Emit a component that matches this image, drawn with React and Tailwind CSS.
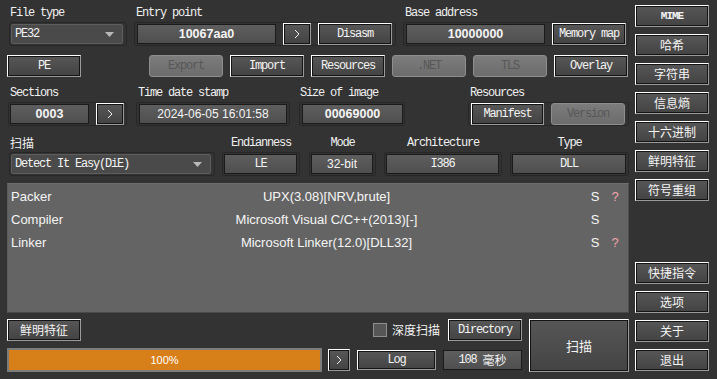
const mono = { fontFamily: '"Liberation Mono", "DejaVu Sans Mono", monospace' };

function Btn({ children, className = '', w = 'w-[74px]', h = 'h-[22px]', text = 'text-[12px] tracking-[-1.2px]', font = 'mono' }) {
  const f = font === 'mono' ? "font-['Liberation_Mono',monospace]" : "font-['Noto_Sans_CJK_SC','Noto_Sans',sans-serif]";
  return (
    <div className={`${w} ${h} shrink-0 border border-t-white border-l-white border-r-[#9a9a9a] border-b-[#9a9a9a] ${className}`}>
      <div className={`w-full h-full border border-[#141414] bg-gradient-to-b from-[#565656] to-[#444444] flex items-center justify-center text-[#f4f4f4] ${text} ${f} leading-none`}>
        {children}
      </div>
    </div>
  );
}

function Disabled({ children }) {
  return (
    <div className="w-[74px] h-[22px] shrink-0 rounded-[3px] border border-[#8e8e8e] bg-gradient-to-b from-[#7c7c7c] to-[#6c6c6c] flex items-center justify-center text-[#575757] text-[12px] tracking-[-1.2px] font-['Liberation_Mono',monospace]">
      {children}
    </div>
  );
}

function Field({ children, className = '', w, bold, mono: m }) {
  const f = m
    ? "font-['Liberation_Mono',monospace] text-[12px] tracking-[-1.2px]"
    : bold
    ? "font-['Liberation_Sans',Arial,sans-serif] font-bold text-[12.5px]"
    : "font-['Liberation_Sans',Arial,sans-serif] text-[12px]";
  return (
    <div className={`${w} h-[20px] shrink-0 border border-[#1a1a1a] bg-gradient-to-b from-[#5e5e5e] to-[#4f4f4f] flex items-center justify-center text-[#f4f4f4] ${f} ${className}`}>
      {children}
    </div>
  );
}

function Frame({ w, children, className = '' }) {
  return (
    <div className={`${w} h-[24px] border border-[#272727] rounded-[3px] flex items-center ${className}`}>
      {children}
    </div>
  );
}

function Label({ children, className = '' }) {
  return (
    <div className={`h-[16px] text-[12px] tracking-[-1.2px] leading-[16px] text-[#f0f0f0] font-['Liberation_Mono',monospace] whitespace-nowrap ${className}`}>
      {children}
    </div>
  );
}

function Combo({ w, children }) {
  return (
    <div className={`${w} h-[20px] rounded-[2px] border border-[#5e5e5e] bg-[#4a4a4a] flex items-center pl-[3px] pr-[8px] text-[#f4f4f4] text-[12px] tracking-[-1.2px] font-['Liberation_Mono',monospace]`}>
      <span className="flex-1 whitespace-nowrap">{children}</span>
      <svg width="9" height="5" viewBox="0 0 9 5"><path d="M0 0h9L4.5 5z" fill="#b8b8b8" /></svg>
    </div>
  );
}

function Arrow() {
  return (
    <svg width="6" height="10" viewBox="0 0 6 10"><path d="M1 1l4 4-4 4" stroke="#f0f0f0" strokeWidth="1" fill="none" /></svg>
  );
}

const results = [
  ['Packer', 'UPX(3.08)[NRV,brute]', true],
  ['Compiler', 'Microsoft Visual C/C++(2013)[-]', false],
  ['Linker', 'Microsoft Linker(12.0)[DLL32]', true],
];

export default function App() {
  const cjk = "font-['Noto_Sans_CJK_SC','Noto_Sans',sans-serif] text-[12px]";
  return (
    <div className="w-[717px] h-[379px] bg-[#333333] flex pl-[7px] pt-[5px] overflow-hidden select-none">
      {/* main column */}
      <div className="w-[622px] flex flex-col">
        {/* row 1 */}
        <div className="flex">
          <div className="ml-[2px]">
            <Label className="pl-[1px]">File type</Label>
            <Frame w="w-[118px]" className="mt-[1px] pl-[1px]"><Combo w="w-[112px]">PE32</Combo></Frame>
          </div>
          <div className="ml-[7px]">
            <Label className="pl-[2px]">Entry point</Label>
            <Frame w="w-[262px]" className="mt-[1px] pl-[2px] gap-[7px]">
              <Field w="w-[139px]" bold>10067aa0</Field>
              <Btn w="w-[28px]"><Arrow /></Btn>
              <Btn>Disasm</Btn>
            </Frame>
          </div>
          <div className="ml-[7px]">
            <Label className="pl-[2px]">Base address</Label>
            <Frame w="w-[226px]" className="mt-[1px] pl-[2px] gap-[7px]">
              <Field w="w-[139px]" bold>10000000</Field>
              <Btn>Memory map</Btn>
            </Frame>
          </div>
        </div>

        {/* row 2 */}
        <div className="flex mt-[9px] gap-[7px]">
          <Btn>PE</Btn>
          <div className="ml-[61px]"><Disabled>Export</Disabled></div>
          <Btn>Import</Btn>
          <Btn>Resources</Btn>
          <Disabled>.NET</Disabled>
          <Disabled>TLS</Disabled>
          <Btn>Overlay</Btn>
        </div>

        {/* row 3 */}
        <div className="flex mt-[8px]">
          <div className="ml-[1px]">
            <Label className="pl-[2px]">Sections</Label>
            <Frame w="w-[119px]" className="mt-[1px] pl-[1px] gap-[7px]">
              <Field w="w-[79px]" bold>0003</Field>
              <Btn w="w-[28px]"><Arrow /></Btn>
            </Frame>
          </div>
          <div className="ml-[9px]">
            <Label className="pl-[2px]">Time date stamp</Label>
            <Frame w="w-[154px]" className="mt-[1px] pl-[2px]">
              <Field w="w-[148px]">2024-06-05 16:01:58</Field>
            </Frame>
          </div>
          <div className="ml-[9px]">
            <Label className="pl-[1px]">Size of image</Label>
            <Frame w="w-[106px]" className="mt-[1px] pl-[2px]">
              <Field w="w-[101px]" bold>00069000</Field>
            </Frame>
          </div>
          <div className="ml-[63px]">
            <Label className="pl-[2px]">Resources</Label>
            <Frame w="w-[161px]" className="mt-[1px] pl-[2px] gap-[7px]">
              <Btn w="w-[73px]">Manifest</Btn>
              <Disabled>Version</Disabled>
            </Frame>
          </div>
        </div>

        {/* row 4 */}
        <div className="flex mt-[9px]">
          <div className="ml-[2px]">
            <div className={`h-[16px] leading-[16px] pl-[1px] text-[#f0f0f0] ${cjk}`}>扫描</div>
            <Frame w="w-[206px]" className="mt-[1px] pl-[1px]"><Combo w="w-[200px]">Detect It Easy(DiE)</Combo></Frame>
          </div>
          <div className="ml-[7px]">
            <Label className="text-center">Endianness</Label>
            <Frame w="w-[78px]" className="mt-[1px] pl-[1px]"><Field w="w-[73px]" mono>LE</Field></Frame>
          </div>
          <div className="ml-[9px]">
            <Label className="text-center">Mode</Label>
            <Frame w="w-[67px]" className="mt-[1px] pl-[1px]"><Field w="w-[62px]">32-bit</Field></Frame>
          </div>
          <div className="ml-[8px]">
            <Label className="text-center">Architecture</Label>
            <Frame w="w-[118px]" className="mt-[1px] pl-[1px]"><Field w="w-[113px]" mono>I386</Field></Frame>
          </div>
          <div className="ml-[8px]">
            <Label className="text-center">Type</Label>
            <Frame w="w-[119px]" className="mt-[1px] pl-[1px]"><Field w="w-[114px]" mono>DLL</Field></Frame>
          </div>
        </div>

        {/* results */}
        <div className="mt-[7px] h-[130px] bg-[#646464] border border-t-[#6e6e6e] border-l-[#5a5a5a] border-r-[#4e4e4e] border-b-[#4a4a4a] pt-[1px] font-['Liberation_Sans',Arial,sans-serif] text-[13px] text-[#f6f6f6]">
          {results.map(([name, value, q]) => (
            <div key={name} className="flex h-[23px] items-center">
              <div className="w-[60px] pl-[3px] whitespace-nowrap">{name}</div>
              <div className="flex-1 text-center whitespace-nowrap">{value}</div>
              <div className="w-[20px] text-center">S</div>
              <div className="w-[20px] text-center text-[#f2a4ae]">{q ? '?' : ''}</div>
              <div className="w-[3px]" />
            </div>
          ))}
        </div>

        {/* bottom */}
        <div className="flex mt-[6px]">
          <div className="w-[515px] flex flex-col">
            <div className="flex items-center h-[22px]">
              <Btn text="text-[12px]" font="cjk">鲜明特征</Btn>
              <div className="flex-1" />
              <div className="w-[14px] h-[14px] border border-[#8e8e8e] bg-[#565656]" />
              <div className={`ml-[5px] text-[#f4f4f4] ${cjk}`}>深度扫描</div>
              <Btn className="ml-[8px]">Directory</Btn>
            </div>
            <div className="flex items-center mt-[7px] h-[24px]">
              <div className="w-[315px] h-[24px] border-2 border-[#7c7c7c] bg-[#d7801a] flex items-center justify-center text-white text-[11px] font-['Liberation_Sans',Arial,sans-serif]">
                100%
              </div>
              <Btn w="w-[22px]" className="ml-[6px]"><Arrow /></Btn>
              <Btn w="w-[79px]" h="h-[20px]" className="ml-[7px]">Log</Btn>
              <Field w="w-[79px]" className={`ml-[7px] !text-[12px] !tracking-normal`}>
                <span className="font-['Liberation_Mono',monospace] tracking-[-1.2px]">108</span>
                <span className={`ml-[6px] ${cjk}`}>毫秒</span>
              </Field>
            </div>
          </div>
          <Btn w="w-[100px]" h="h-[53px]" className="ml-[7px]" font="cjk" text="text-[13px]">扫描</Btn>
        </div>
      </div>

      {/* right column */}
      <div className="ml-[6px] w-[74px] flex flex-col gap-[7px] pb-[8px]">
        <Btn text="text-[11px] font-bold tracking-[-1px]">MIME</Btn>
        {['哈希', '字符串', '信息熵', '十六进制', '鲜明特征', '符号重组'].map((t) => (
          <Btn key={t} font="cjk" text="text-[12px]">{t}</Btn>
        ))}
        <div className="flex-1" />
        {['快捷指令', '选项', '关于', '退出'].map((t) => (
          <Btn key={t} font="cjk" text="text-[12px]">{t}</Btn>
        ))}
      </div>
    </div>
  );
}
